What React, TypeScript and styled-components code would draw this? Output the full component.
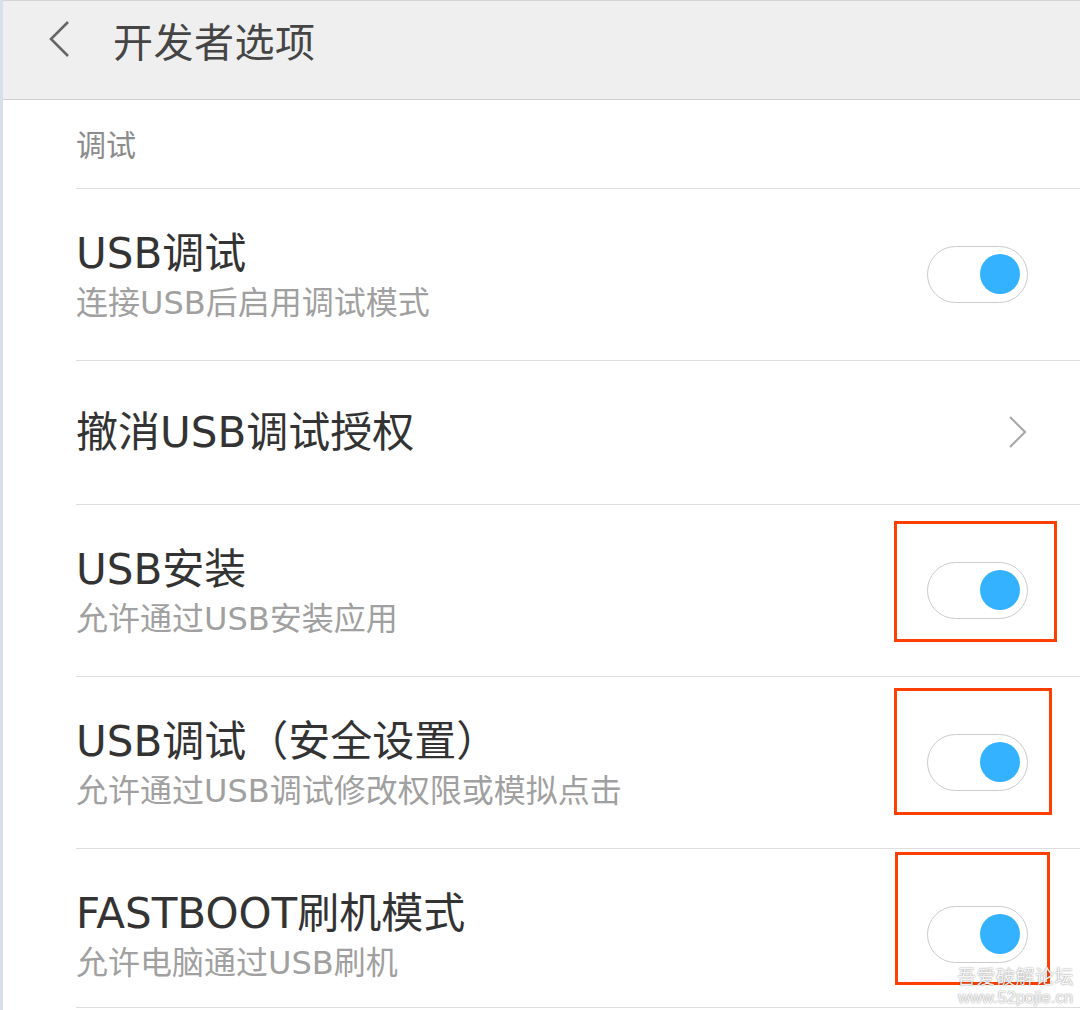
import React from "react";
import styled, { createGlobalStyle } from "styled-components";

const Global = createGlobalStyle`
  html, body {
    margin: 0;
    padding: 0;
    background: #fff;
  }
  body {
    font-family: "Noto Sans CJK SC", "Noto Sans", sans-serif;
  }
`;

const rowFont = `"DejaVu Sans", "Noto Sans CJK SC", sans-serif`;

const Page = styled.div`
  position: relative;
  width: 1080px;
  height: 1010px;
  box-sizing: border-box;
  border-left: 3px solid #d7dfed;
  overflow: hidden;
  background: #fff;
`;

const Header = styled.header`
  height: 100px;
  box-sizing: border-box;
  display: flex;
  align-items: center;
  padding-left: 44px;
  padding-bottom: 20px;
  background: #efefef;
  border-top: 1px solid #d4d4d4;
  border-bottom: 1px solid #cfcfcf;
`;

const BackButton = styled.button`
  width: 24px;
  height: 40px;
  padding: 0;
  border: 0;
  background: none;
  display: flex;
  align-items: center;
  margin-right: 42px;
`;

const Title = styled.h1`
  margin: 0;
  font-size: 40px;
  font-weight: 400;
  color: #454545;
  letter-spacing: 0.5px;
`;

const Content = styled.div`
  padding-left: 73px;
`;

const SectionLabel = styled.div`
  height: 88px;
  box-sizing: border-box;
  display: flex;
  align-items: center;
  padding-bottom: 3px;
  font-size: 30px;
  color: #8c8c8c;
`;

const Row = styled.div<{ $height: number; $cut?: number }>`
  position: relative;
  height: ${(p) => p.$height}px;
  box-sizing: border-box;
  display: flex;
  align-items: center;
  justify-content: space-between;
  padding-right: 52px;
  padding-top: ${(p) => p.$cut ?? 0}px;
  border-top: 1px solid #dddddd;
`;

const Texts = styled.div<{ $sub: boolean }>`
  display: flex;
  flex-direction: column;
  padding-top: ${(p) => (p.$sub ? 5 : 0)}px;
  font-family: ${rowFont};
`;

const ItemTitle = styled.div`
  font-size: 42px;
  line-height: 52px;
  color: #333;
`;

const ItemSub = styled.div`
  font-size: 32px;
  line-height: 46px;
  color: #a0a0a0;
`;

const Toggle = styled.div<{ $on: boolean }>`
  position: relative;
  width: 101px;
  height: 57px;
  box-sizing: border-box;
  border: 1.5px solid #cbcbcb;
  border-radius: 29px;
  background: #fff;

  &::after {
    content: "";
    position: absolute;
    top: 7px;
    ${(p) => (p.$on ? "right: 7px;" : "left: 7px;")}
    width: 40px;
    height: 40px;
    border-radius: 50%;
    background: ${(p) => (p.$on ? "#35b2ff" : "#ddd")};
  }
`;

const Mark = styled.div<{ $top: number; $right: number; $w: number; $h: number }>`
  position: absolute;
  top: ${(p) => p.$top}px;
  right: ${(p) => p.$right}px;
  width: ${(p) => p.$w}px;
  height: ${(p) => p.$h}px;
  box-sizing: border-box;
  border: 3px solid #ff3f00;
  pointer-events: none;
`;

const Watermark = styled.div`
  position: absolute;
  right: 6px;
  bottom: 5px;
  display: flex;
  flex-direction: column;
  align-items: center;
  color: rgba(255, 255, 255, 0.92);
  text-shadow: 0 0 2px rgba(0, 0, 0, 0.35), 0 0 1px rgba(0, 0, 0, 0.25);
  line-height: 1;
`;

const WmTop = styled.span`
  font-size: 19px;
  letter-spacing: 0.5px;
`;

const WmBottom = styled.span`
  font-family: "Liberation Sans", sans-serif;
  font-size: 16.5px;
  margin-top: 4px;
`;

const Back = () => (
  <svg width="24" height="40" viewBox="0 0 24 40">
    <path d="M21 2 L4 19 L21 36" fill="none" stroke="#666" strokeWidth="2.6" />
  </svg>
);

const Chevron = () => (
  <svg width="20" height="36" viewBox="0 0 20 36">
    <path d="M2 2 L17 17 L2 32" fill="none" stroke="#a8a8a8" strokeWidth="2.2" />
  </svg>
);

type Mk = { top: number; right: number; w: number; h: number };

type Item = {
  title: string;
  sub?: string;
  kind: "toggle" | "link";
  height: number;
  cut?: number;
  mark?: Mk;
};

const items: Item[] = [
  { title: "USB调试", sub: "连接USB后启用调试模式", kind: "toggle", height: 172 },
  { title: "撤消USB调试授权", kind: "link", height: 144 },
  {
    title: "USB安装",
    sub: "允许通过USB安装应用",
    kind: "toggle",
    height: 172,
    mark: { top: 16, right: 23, w: 163, h: 121 },
  },
  {
    title: "USB调试（安全设置）",
    sub: "允许通过USB调试修改权限或模拟点击",
    kind: "toggle",
    height: 172,
    mark: { top: 11, right: 28, w: 158, h: 127 },
  },
  {
    title: "FASTBOOT刷机模式",
    sub: "允许电脑通过USB刷机",
    kind: "toggle",
    height: 159,
    cut: 13,
    mark: { top: 3, right: 30, w: 155, h: 133 },
  },
];

export default function App() {
  return (
    <Page>
      <Global />
      <Header>
        <BackButton>
          <Back />
        </BackButton>
        <Title>开发者选项</Title>
      </Header>
      <Content>
        <SectionLabel>调试</SectionLabel>
        {items.map((it) => (
          <Row key={it.title} $height={it.height} $cut={it.cut}>
            <Texts $sub={!!it.sub}>
              <ItemTitle>{it.title}</ItemTitle>
              {it.sub && <ItemSub>{it.sub}</ItemSub>}
            </Texts>
            {it.kind === "toggle" ? <Toggle $on /> : <Chevron />}
            {it.mark && (
              <Mark $top={it.mark.top} $right={it.mark.right} $w={it.mark.w} $h={it.mark.h} />
            )}
          </Row>
        ))}
        <Row $height={2} />
      </Content>
      <Watermark>
        <WmTop>吾爱破解论坛</WmTop>
        <WmBottom>www.52pojie.cn</WmBottom>
      </Watermark>
    </Page>
  );
}
